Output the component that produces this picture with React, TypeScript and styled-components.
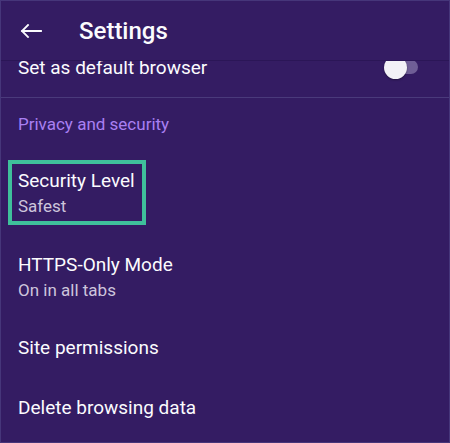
import React from "react";
import styled, { createGlobalStyle } from "styled-components";

const Global = createGlobalStyle`
  html, body { margin: 0; padding: 0; background: #341c63; }
  * { box-sizing: border-box; }
`;

const Frame = styled.div`
  width: 450px;
  height: 443px;
  overflow: hidden;
  display: flex;
  flex-direction: column;
  background: #341c63;
  border: 1px solid #46367a;
  font-family: Roboto, "Noto Sans", sans-serif;
  color: #fbfbfe;
`;

const Header = styled.header`
  height: 60px;
  flex: none;
  display: flex;
  align-items: center;
  border-bottom: 1px solid #2b1657;
  padding-left: 19px;
  gap: 37px;
`;

const BackButton = styled.button`
  width: 22px;
  height: 22px;
  padding: 0;
  border: 0;
  background: none;
  display: flex;
  align-items: center;
  justify-content: center;
  color: #fbfbfe;
`;

const Title = styled.h1`
  margin: 0;
  font-size: 24px;
  font-weight: 500;
  line-height: 28px;
`;

const List = styled.div`
  flex: 1;
  overflow: hidden;
  display: flex;
  flex-direction: column;
`;

const Row = styled.div<{ $h: number }>`
  position: relative;
  height: ${(p) => p.$h}px;
  flex: none;
  display: flex;
  align-items: center;
  justify-content: space-between;
  padding: 0 31px 0 17px;
`;

const ItemTitle = styled.div`
  font-size: 19px;
  line-height: 22px;
  color: #fbfbfe;
`;

/* the row scrolled half under the toolbar */
const PartialRow = styled(Row)`
  align-items: flex-end;
  overflow: hidden;
  padding-bottom: 22px;
  border-bottom: 1px solid #4a3a7b;
  box-sizing: content-box;

  ${ItemTitle} {
    line-height: 14px;
  }
`;

const TextBlock = styled.div`
  display: flex;
  flex-direction: column;
  gap: 4px;
`;

const Summary = styled.div`
  font-size: 17px;
  line-height: 20px;
  color: #cdc5dc;
`;

const Category = styled.div`
  font-size: 17px;
  line-height: 20px;
  color: #a980f2;
`;

const Track = styled.div`
  width: 33px;
  height: 14px;
  border-radius: 7px;
  background: #6f5e96;
  display: flex;
  align-items: center;
  margin-bottom: 1px;
`;

const Thumb = styled.div`
  flex: none;
  width: 23px;
  height: 23px;
  border-radius: 50%;
  background: #f2f1f6;
  margin-left: -1px;
  box-shadow: 0 1px 2px rgba(0, 0, 0, 0.35);
`;

const Highlight = styled.div`
  position: absolute;
  left: 7px;
  top: 10px;
  width: 138px;
  height: 65px;
  border: 4px solid #3fc09b;
  pointer-events: none;
`;

const BackIcon = () => (
  <svg width="22" height="14" viewBox="0 0 22 14" fill="none">
    <path
      d="M21 7H2M8 1L2 7l6 6"
      stroke="currentColor"
      strokeWidth="1.8"
      strokeLinecap="square"
    />
  </svg>
);

export default function App() {
  return (
    <>
      <Global />
      <Frame>
        <Header>
          <BackButton aria-label="Back">
            <BackIcon />
          </BackButton>
          <Title>Settings</Title>
        </Header>
        <List>
          <PartialRow $h={14}>
            <ItemTitle>Set as default browser</ItemTitle>
            <Track>
              <Thumb />
            </Track>
          </PartialRow>
          <Row $h={52}>
            <Category>Privacy and security</Category>
          </Row>
          <Row $h={85}>
            <TextBlock>
              <ItemTitle>Security Level</ItemTitle>
              <Summary>Safest</Summary>
            </TextBlock>
            <Highlight />
          </Row>
          <Row $h={84}>
            <TextBlock>
              <ItemTitle>HTTPS-Only Mode</ItemTitle>
              <Summary>On in all tabs</Summary>
            </TextBlock>
          </Row>
          <Row $h={58}>
            <ItemTitle>Site permissions</ItemTitle>
          </Row>
          <Row $h={62}>
            <ItemTitle>Delete browsing data</ItemTitle>
          </Row>
        </List>
      </Frame>
    </>
  );
}
